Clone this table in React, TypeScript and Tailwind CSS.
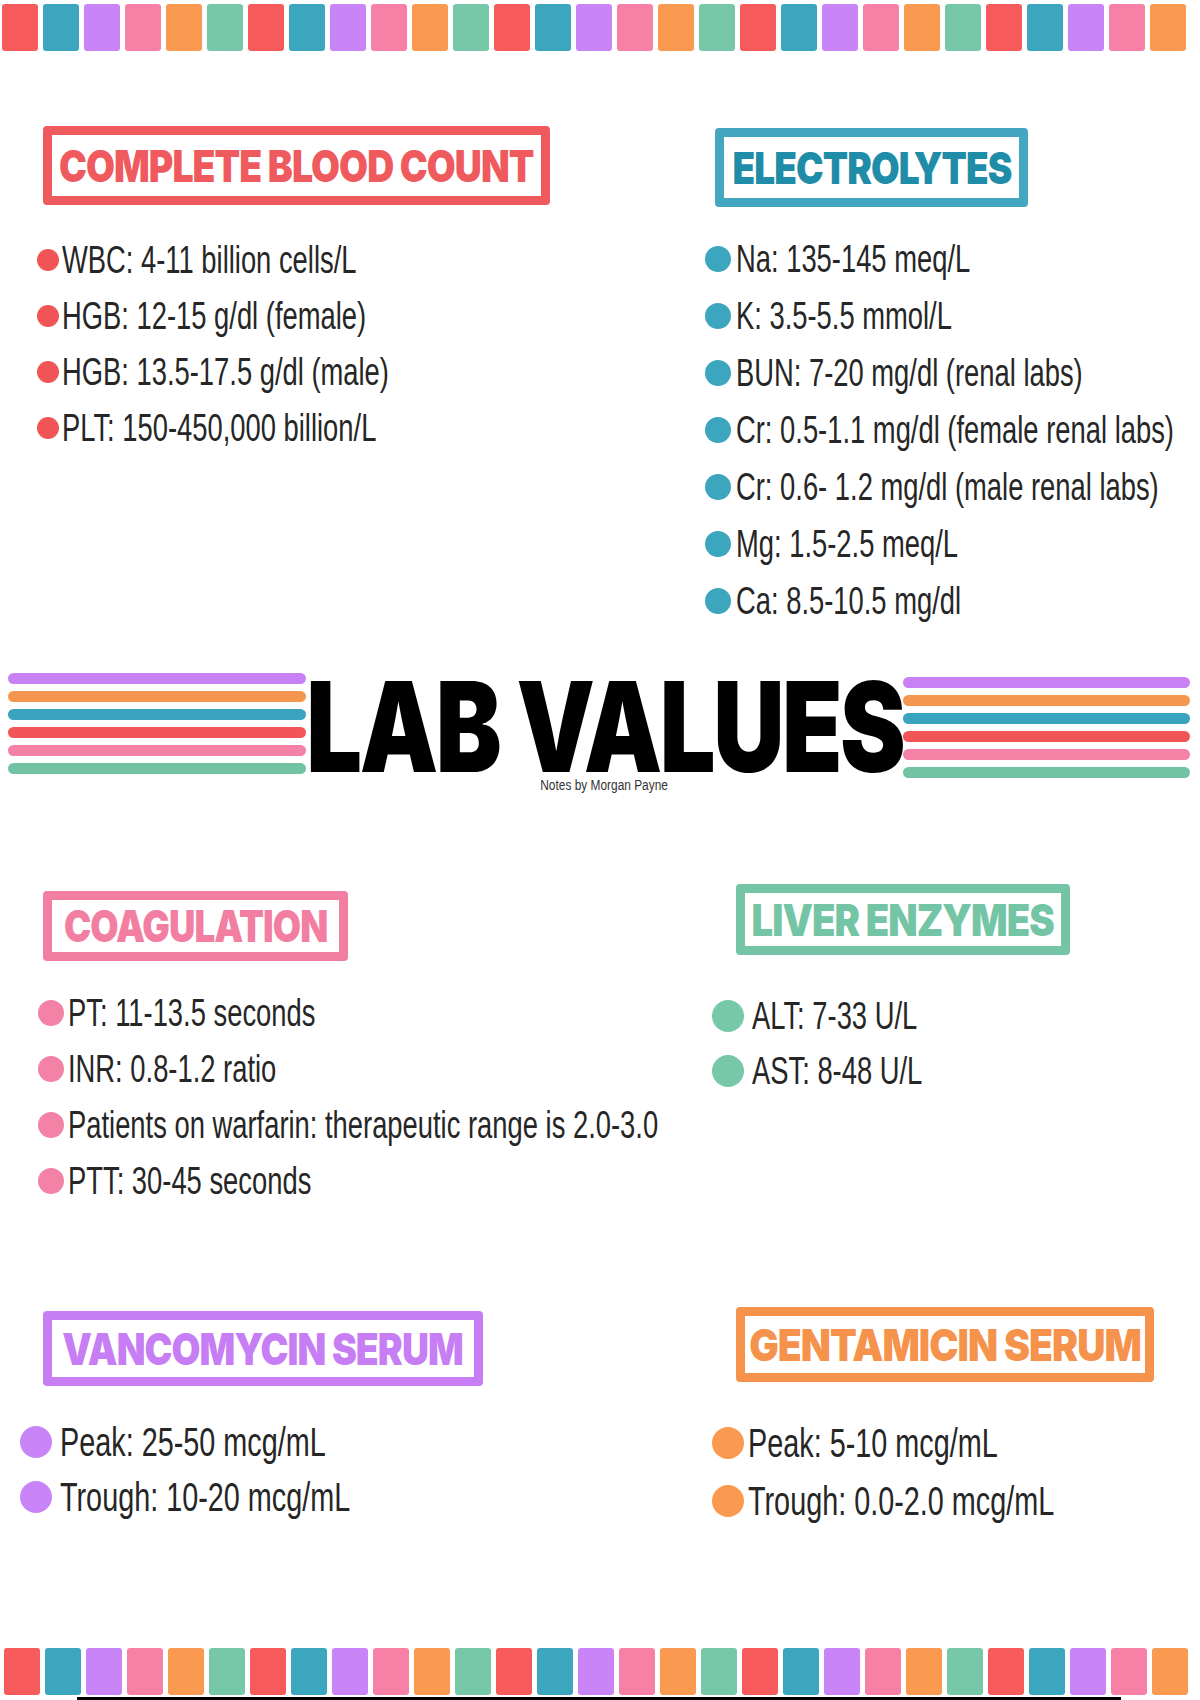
import React from 'react';

// Palette used by the squares, stripes, boxes and bullets
const SQUARE_COLORS = ['bg-[#f65a5b]', 'bg-[#3ca6bf]', 'bg-[#c985f7]', 'bg-[#f780a6]', 'bg-[#f99a50]', 'bg-[#76c8a8]'];
const STRIPE_COLORS = ['bg-[#c880f5]', 'bg-[#f4964f]', 'bg-[#3aa3bd]', 'bg-[#f25558]', 'bg-[#f481a6]', 'bg-[#72c3a4]'];

const bodyFont = { fontFamily: '"Liberation Sans", Arial, sans-serif' };
const titleFont = { fontFamily: 'Inter, "Noto Sans", sans-serif' };

// Row of little coloured tiles at the top and bottom of the sheet
const SquareStrip = ({ className = '' }: { className?: string }) => (
  <div className={`flex gap-[5px] ${className}`}>
    {Array.from({ length: 29 }).map((_, i) => (
      <div key={i} className={`h-[47px] w-[36px] shrink-0 rounded-[3px] ${SQUARE_COLORS[i % 6]}`} />
    ))}
  </div>
);

const Stripes = ({ className = '' }: { className?: string }) => (
  <div className={`flex flex-col gap-[7px] ${className}`}>
    {STRIPE_COLORS.map((c) => (
      <div key={c} className={`h-[11px] w-full rounded-full ${c}`} />
    ))}
  </div>
);

interface TitleBoxProps {
  text: string;
  className: string; // size, position and border colour
  textClass: string; // text colour and horizontal squeeze
}

// Outlined heading box, e.g. "complete blood count"
const TitleBox = ({ text, className, textClass }: TitleBoxProps) => (
  <div className={`flex items-center justify-center rounded-[4px] border-[9px] ${className}`}>
    <span
      style={titleFont}
      className={`whitespace-nowrap text-[44px] font-black uppercase leading-none tracking-tight ${textClass}`}
    >
      {text}
    </span>
  </div>
);

interface ListProps {
  items: string[];
  dot: string; // bullet colour + size
  rowClass: string; // row height
  gap: string;
  textClass?: string;
}

const ValueList = ({ items, dot, rowClass, gap, textClass = 'text-[38px]' }: ListProps) => (
  <ul>
    {items.map((item) => (
      <li key={item} className={`flex items-center ${rowClass} ${gap}`}>
        <span className={`shrink-0 rounded-full ${dot}`} />
        <span
          style={bodyFont}
          className={`origin-left scale-x-[0.72] whitespace-nowrap leading-none text-[#262626] ${textClass}`}
        >
          {item}
        </span>
      </li>
    ))}
  </ul>
);

const App = () => {
  const cbc = [
    'WBC: 4-11 billion cells/L',
    'HGB: 12-15 g/dl (female)',
    'HGB: 13.5-17.5 g/dl (male)',
    'PLT: 150-450,000 billion/L',
  ];
  const electrolytes = [
    'Na: 135-145 meq/L',
    'K: 3.5-5.5 mmol/L',
    'BUN: 7-20 mg/dl (renal labs)',
    'Cr: 0.5-1.1 mg/dl (female renal labs)',
    'Cr: 0.6- 1.2 mg/dl (male renal labs)',
    'Mg: 1.5-2.5 meq/L',
    'Ca: 8.5-10.5 mg/dl',
  ];
  const coagulation = [
    'PT: 11-13.5 seconds',
    'INR: 0.8-1.2 ratio',
    'Patients on warfarin: therapeutic range is 2.0-3.0',
    'PTT: 30-45 seconds',
  ];
  const liver = ['ALT: 7-33 U/L', 'AST: 8-48 U/L'];
  const vanco = ['Peak: 25-50 mcg/mL', 'Trough: 10-20 mcg/mL'];
  const genta = ['Peak: 5-10 mcg/mL', 'Trough: 0.0-2.0 mcg/mL'];

  return (
    <div className="flex h-[1700px] w-[1200px] flex-col overflow-hidden bg-white">
      {/* Top tiles */}
      <SquareStrip className="pl-[2px] pt-[4px]" />

      {/* CBC + Electrolytes */}
      <div className="mt-[75px] flex">
        <div className="w-[705px] shrink-0 pl-[37px]">
          <TitleBox
            text="complete blood count"
            className="ml-[6px] h-[79px] w-[507px] border-[#ef5a5e]"
            textClass="text-[#ef5a5e] scale-x-[0.85]"
          />
          <div className="mt-[27px]">
            <ValueList items={cbc} dot="h-[22px] w-[22px] bg-[#f25558]" rowClass="h-[56px]" gap="gap-[3px]" />
          </div>
        </div>
        <div className="flex-1">
          <TitleBox
            text="Electrolytes"
            className="ml-[10px] mt-[2px] h-[79px] w-[313px] border-[#44a7bf]"
            textClass="text-[#1f8ca8] scale-x-[0.84]"
          />
          <div className="mt-[23px]">
            <ValueList items={electrolytes} dot="h-[26px] w-[26px] bg-[#3ca6bf]" rowClass="h-[57px]" gap="gap-[5px]" />
          </div>
        </div>
      </div>

      {/* Lab values banner */}
      <div className="mt-[44px] flex items-start">
        <Stripes className="ml-[8px] w-[298px] shrink-0" />
        <div className="flex w-[597px] shrink-0 flex-col items-center">
          <h1
            style={titleFont}
            className="mt-[4px] scale-x-[0.79] whitespace-nowrap text-[125px] font-black leading-[100px] tracking-tight text-black"
          >
            LAB VALUES
          </h1>
          <p style={bodyFont} className="scale-x-[0.85] text-[14px] leading-[16px] text-[#333]">
            Notes by Morgan Payne
          </p>
        </div>
        <Stripes className="mt-[4px] w-[287px] shrink-0" />
      </div>

      {/* Coagulation + Liver enzymes */}
      <div className="mt-[91px] flex">
        <div className="w-[705px] shrink-0 pl-[38px]">
          <TitleBox
            text="Coagulation"
            className="ml-[5px] mt-[7px] h-[70px] w-[305px] border-[#f27ea2]"
            textClass="text-[#f27ea2] scale-x-[0.83]"
          />
          <div className="mt-[24px]">
            <ValueList items={coagulation} dot="h-[26px] w-[26px] bg-[#f481a6]" rowClass="h-[56px]" gap="gap-[4px]" />
          </div>
        </div>
        <div className="flex-1">
          <TitleBox
            text="Liver Enzymes"
            className="ml-[31px] h-[71px] w-[334px] border-[#74c5a5]"
            textClass="text-[#74c5a5] scale-x-[0.87]"
          />
          <div className="mt-[33px] pl-[7px]">
            <ValueList items={liver} dot="h-[32px] w-[32px] bg-[#76c8a8]" rowClass="h-[55px]" gap="gap-[8px]" />
          </div>
        </div>
      </div>

      {/* Vancomycin + Gentamicin */}
      <div className="mt-[98px] flex">
        <div className="w-[705px] shrink-0 pl-[20px]">
          <TitleBox
            text="Vancomycin Serum"
            className="ml-[23px] mt-[4px] h-[75px] w-[440px] border-[#c77df3]"
            textClass="text-[#c77df3] scale-x-[0.85]"
          />
          <div className="mt-[28px]">
            <ValueList
              items={vanco}
              dot="h-[32px] w-[32px] bg-[#c985f7]"
              rowClass="h-[55px]"
              gap="gap-[8px]"
              textClass="text-[40px]"
            />
          </div>
        </div>
        <div className="flex-1">
          <TitleBox
            text="Gentamicin Serum"
            className="ml-[31px] h-[75px] w-[418px] border-[#f5924c]"
            textClass="text-[#f5924c] scale-x-[0.89]"
          />
          <div className="mt-[32px] pl-[7px]">
            <ValueList
              items={genta}
              dot="h-[32px] w-[32px] bg-[#f99a50]"
              rowClass="h-[58px]"
              gap="gap-[4px]"
              textClass="text-[40px]"
            />
          </div>
        </div>
      </div>

      {/* Bottom tiles */}
      <div className="mt-auto">
        <SquareStrip className="pl-[4px]" />
        <div className="ml-[77px] mt-[2px] h-[3px] w-[1044px] bg-black" />
      </div>
    </div>
  );
};

export default App;
